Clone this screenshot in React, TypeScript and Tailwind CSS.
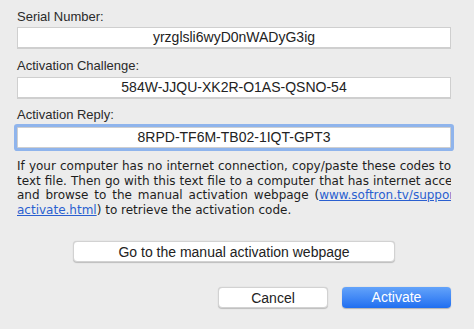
import React from "react";

const label = "text-[13px] leading-4 text-[#2a2a2a] font-['Liberation_Sans',Arial,sans-serif]";
const field =
  "h-[21px] w-full bg-white border border-[#cfcfcf] shadow-[0_0.5px_0.5px_rgba(0,0,0,0.12)] flex items-center justify-center text-[14px] text-[#222] font-['Liberation_Sans',Arial,sans-serif]";
const line = "whitespace-nowrap text-justify [text-align-last:justify]";
const btn =
  "h-[21px] rounded-[4px] bg-white border border-[#d2d2d2] shadow-[0_0.5px_1px_rgba(0,0,0,0.2)] text-[14px] text-[#222] font-['Liberation_Sans',Arial,sans-serif]";

export default function App() {
  return (
    <div className="w-[474px] h-[329px] overflow-hidden bg-[#ececec] pl-[17px] pr-[23px] pt-[9px]">
      <div className={label}>Serial Number:</div>
      <div className={`${field} mt-[2px]`}>yrzglsli6wyD0nWADyG3ig</div>

      <div className={`${label} mt-[10px]`}>Activation Challenge:</div>
      <div className={`${field} mt-[3px]`}>584W-JJQU-XK2R-O1AS-QSNO-54</div>

      <div className={`${label} mt-[9px]`}>Activation Reply:</div>
      <div
        className={`${field} mt-[4px] border-[#9cbcec] rounded-[1px] shadow-[0_0_0_3px_#8fb4ec]`}
      >
        8RPD-TF6M-TB02-1IQT-GPT3
      </div>

      {/* help text, clipped at the right like the original dialog */}
      <div className="mt-[11px] w-[434px] overflow-hidden text-[12px] leading-[14.7px] text-[#1e1e1e] font-['DejaVu_Sans',Verdana,sans-serif]">
        <div className={`${line} w-[434px]`}>If your computer has no internet connection, copy/paste these codes to</div>
        <div className={`${line} w-[448px]`}>text file. Then go with this text file to a computer that has internet access</div>
        <div className={`${line} w-[446px]`}>
          and browse to the manual activation webpage (
          <span className="text-[#2a5fd0] underline">www.softron.tv/support/</span>
        </div>
        <div className="whitespace-nowrap">
          <span className="text-[#2a5fd0] underline">activate.html</span>) to retrieve the activation code.
        </div>
      </div>

      <div className="mt-[23px] flex justify-center">
        <button className={`${btn} w-[322px]`}>Go to the manual activation webpage</button>
      </div>

      <div className="mt-[25px] flex justify-end gap-[14px]">
        <button className={`${btn} w-[110px]`}>Cancel</button>
        <button className="h-[21px] w-[109px] rounded-[4px] bg-gradient-to-b from-[#63a3fa] to-[#1f6ef0] shadow-[0_0.5px_1px_rgba(0,0,0,0.25)] text-[14px] text-white font-['Liberation_Sans',Arial,sans-serif]">
          Activate
        </button>
      </div>
    </div>
  );
}
